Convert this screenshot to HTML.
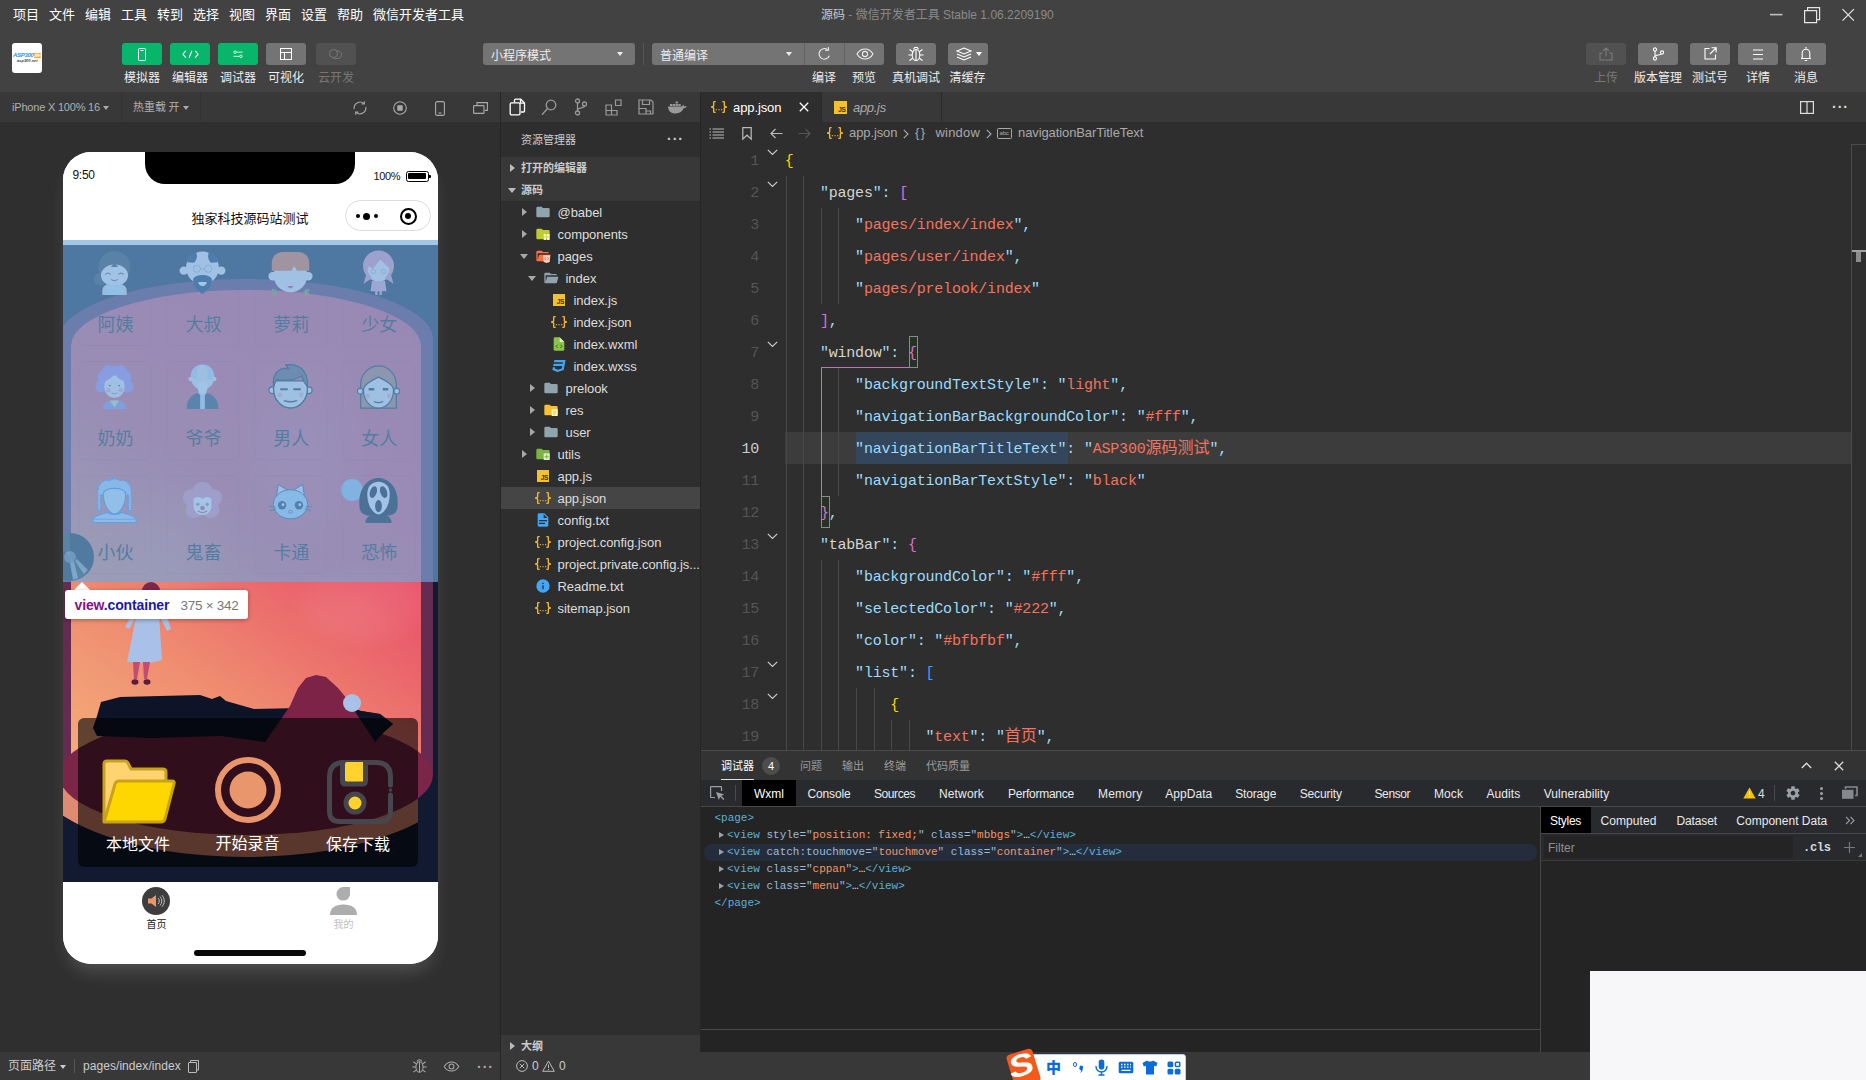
<!DOCTYPE html>
<html lang="zh-CN">
<head>
<meta charset="utf-8">
<title>微信开发者工具</title>
<style>
*{box-sizing:border-box;margin:0;padding:0}
html,body{width:1866px;height:1080px;overflow:hidden;background:#2e2e2e}
body{position:relative;font-family:"Liberation Sans","Noto Sans CJK SC",sans-serif;font-size:12px;color:#ddd;line-height:1}
.a{position:absolute}
.t{position:absolute;white-space:nowrap;line-height:1}
svg{position:absolute;overflow:visible}
/* top */
#menubar{left:0;top:0;width:1866px;height:30px;background:#424242}
#menubar .m{position:absolute;top:8px;font-size:13px;color:#fff;white-space:nowrap}
#toolbar{left:0;top:30px;width:1866px;height:62px;background:#424242}
.tb{position:absolute;top:13px;width:40px;height:22px;border-radius:3px;background:#747474}
.tb.g{background:#07b56b}
.tb.d{background:#515151}
.tl{position:absolute;top:42.300px;font-size:12px;color:#eee;white-space:nowrap;transform:translateX(-50%)}
.tl.d{color:#777}
.sel{position:absolute;top:13px;height:22px;background:#747474;border-radius:3px;color:#eee;font-size:12px}
/* sim */
#sim{left:0;top:92px;width:500px;height:988px;background:#2f2f2f}
#simbar{left:0;top:0;width:500px;height:30px;background:#383838}
#simfoot{left:0;top:960px;width:500px;height:28px;background:#383838}
#phone{left:63px;top:60px;width:375px;height:812px;border-radius:28px;overflow:hidden;background:#fff;box-shadow:0 12px 18px -5px rgba(255,255,255,.17)}
.card{position:absolute;width:73px;height:99px;border:1px solid rgba(60,30,60,.10);border-radius:6px}
.cn{position:absolute;left:0;width:73px;top:68px;text-align:center;font-size:18px;color:#1c2a34;white-space:nowrap}
.pl{font-size:16px;color:#fff}
/* explorer */
#exp{left:501px;top:92px;width:199px;height:988px;background:#2e2e2e}
.row{position:absolute;left:0;width:199px;height:22px}
.row .n{position:absolute;top:5px;font-size:13px;color:#ddd;white-space:nowrap;letter-spacing:-0.05px}
/* editor */
#ed{left:701px;top:92px;width:1165px;height:658px;background:#2e2e2e}
.cl{position:absolute;left:0;width:1165px;height:32px;line-height:32px;white-space:pre}
.cl .ln{position:absolute;left:0;top:1.500px;width:58px;text-align:right;font:15px/32px "Liberation Mono",monospace;letter-spacing:-0.2px;color:#555}
.cl .ln.cur{color:#ccc}
.cl .cd{position:absolute;left:83.700px;top:1.500px;font:15px/32px "Liberation Mono","Noto Sans CJK SC",monospace;letter-spacing:-0.2015px;color:#d4d4d4;white-space:pre}
.gd{position:absolute;top:0;width:1px;height:32px;background:#484848}
.y{color:#ffd700}.m{color:#da70d6}.b{color:#3a9fff}.q{color:#9cdcfe}.w{color:#d4d4d4}.s{color:#f4735e}
.sc{line-height:0;color:#f4735e;font-family:"Noto Sans CJK SC",sans-serif;font-size:16px;letter-spacing:0}
#panel{left:701px;top:750px;width:1165px;height:302px;background:#242424}
.dt{top:37.500px;font-size:12px;letter-spacing:-0.25px}
.dl{position:absolute;left:0;height:17px;width:839px}
.dc{position:absolute;top:0;font:11px/17px "Liberation Mono",monospace;white-space:pre;letter-spacing:-0.02px}
.ar{position:absolute;top:4.500px;border:3.500px solid transparent;border-left:5px solid #9aa0a6;border-right:0}
.tg{color:#5db0d7}.an{color:#9bbbdc}.av{color:#f29766}.el{color:#e8eaed}
#status{left:501px;top:1052px;width:1365px;height:28px;background:#383838}
</style>
</head>
<body>
<div id="menubar" class="a">
<span class="m" style="left:13px">项目</span><span class="m" style="left:49px">文件</span><span class="m" style="left:85px">编辑</span><span class="m" style="left:121px">工具</span><span class="m" style="left:157px">转到</span><span class="m" style="left:193px">选择</span><span class="m" style="left:229px">视图</span><span class="m" style="left:265px">界面</span><span class="m" style="left:301px">设置</span><span class="m" style="left:337px">帮助</span><span class="m" style="left:373px">微信开发者工具</span>
<div class="t" id="wtitle" style="left:821px;top:9px;font-size:12px;color:#8a8a8a"><span style="color:#c8c8c8">源码</span> - 微信开发者工具 Stable 1.06.2209190</div>
<svg style="left:1762px;top:0" width="104" height="30" viewBox="0 0 104 30" fill="none" stroke="#e6e6e6" stroke-width="1.2">
<path d="M8 14.6h12.5" stroke="#bdbdbd" stroke-width="1.6"/>
<path d="M42.6 10.6h12v12h-12z M45.6 10.6v-3h12v12h-3"/>
<path d="M80.5 9.2l11.4 11.4 M91.9 9.2L80.5 20.6"/>
</svg>
</div>
<div id="toolbar" class="a">
<div class="a" style="left:12px;top:13px;width:30px;height:30px;border-radius:3px;background:#fff;overflow:hidden">
<div class="t" style="left:1px;top:9.300px;font-size:6px;font-weight:bold;font-style:italic;color:#3a8fd0;letter-spacing:-0.3px">ASP300<span style="background:#f39a1e;color:#fff;font-size:4px">源码</span></div>
<div class="t" style="left:5px;top:16.300px;font-size:4px;font-weight:bold;font-style:italic;color:#444">asp300.net</div>
</div>
<div class="tb g" style="left:122px"><svg style="left:16px;top:4.5px" width="8" height="13" viewBox="0 0 8 13" fill="none" stroke="#fff" stroke-width="1"><rect x=".5" y=".5" width="7" height="12" rx="1"/><path d="M2.5 2.5h3"/></svg></div>
<div class="tb g" style="left:170px"><svg style="left:11.500px;top:6.500px" width="17" height="8.500" viewBox="0 0 18 9" fill="none" stroke="#fff" stroke-width="1.150"><path d="M4 1L1 4.5 4 8M14 1l3 3.500L14 8M10.500 .8L7.500 8.200"/></svg></div>
<div class="tb g" style="left:218px"><svg style="left:15px;top:6.500px" width="10" height="8.500" viewBox="0 0 12 10" fill="none" stroke="#d9f5e8" stroke-width="1.150"><circle cx="2.500" cy="2.500" r="1.500"/><path d="M4 2.500h7.500"/><circle cx="9.500" cy="7.500" r="1.500"/><path d="M.5 7.500h7.500"/></svg></div>
<div class="tb" style="left:266px"><svg style="left:14px;top:5px" width="12" height="12" viewBox="0 0 12 12" fill="none" stroke="#fff" stroke-width="1"><rect x=".5" y=".5" width="11" height="11"/><path d="M.5 4.500h11M4.500 4.500v7"/></svg></div>
<div class="tb d" style="left:316px"><svg style="left:12px;top:5px" width="16" height="12" viewBox="0 0 16 12" fill="none" stroke="#777" stroke-width="1"><circle cx="5.500" cy="5.500" r="4"/><path d="M8.500 3.200a3.800 3.800 0 1 1 2 7.300H5.500"/></svg></div>
<span class="tl" style="left:142px">模拟器</span><span class="tl" style="left:190px">编辑器</span><span class="tl" style="left:238px">调试器</span><span class="tl" style="left:286px">可视化</span><span class="tl d" style="left:336px">云开发</span>

<div class="sel" style="left:483px;width:152px"><span class="t" style="left:8px;top:6.500px">小程序模式</span><div class="a" style="left:134px;top:9px;border:3px solid transparent;border-top:4px solid #eee"></div></div>
<div class="a" style="left:643px;top:13px;width:1px;height:22px;background:#555"></div>
<div class="sel" style="left:652px;width:232px"><span class="t" style="left:8px;top:6.500px">普通编译</span><div class="a" style="left:134px;top:9px;border:3px solid transparent;border-top:4px solid #eee"></div>
<div class="a" style="left:151.800px;top:0;width:1px;height:22px;background:#636363"></div><div class="a" style="left:191.800px;top:0;width:1px;height:22px;background:#636363"></div>
<svg style="left:165px;top:4px" width="15" height="14" viewBox="0 0 15 14" fill="none" stroke="#eee" stroke-width="1.1"><path d="M12.300 8.800A5.300 5.300 0 1 1 10.500 2.600"/><path d="M8.200 3.400l3.400-.3-.4-3"/></svg>
<svg style="left:204px;top:5px" width="18" height="12" viewBox="0 0 18 12" fill="none" stroke="#eee" stroke-width="1.1"><path d="M1 6c2-3.300 5-5 8-5s6 1.700 8 5c-2 3.300-5 5-8 5s-6-1.700-8-5z"/><circle cx="9" cy="6" r="2.600"/></svg>
</div>
<span class="tl" style="left:824px">编译</span><span class="tl" style="left:864px">预览</span>
<div class="tb" style="left:896px"><svg style="left:11px;top:3px" width="18" height="16" viewBox="0 0 18 16" fill="none" stroke="#fff" stroke-width="1.1"><ellipse cx="9" cy="9" rx="3.800" ry="5.500"/><path d="M9 3.500v11M6.500 3.300a2.600 2.600 0 0 1 5 0M5.200 9H1.500M16.500 9h-3.700M5.700 5.700L2.500 3.500M12.300 5.700l3.200-2.200M5.700 12.300l-3.200 2.200M12.300 12.300l3.200 2.200"/></svg></div>
<div class="tb" style="left:948px"><svg style="left:8px;top:4px" width="16" height="14" viewBox="0 0 16 14" fill="none" stroke="#fff" stroke-width="1.1"><path d="M8 1l7 3-7 3-7-3z M1 7l7 3 7-3 M1 10l7 3 7-3"/></svg><div class="a" style="left:28px;top:9px;border:3px solid transparent;border-top:4px solid #fff"></div></div>
<span class="tl" style="left:916px">真机调试</span><span class="tl" style="left:967.500px">清缓存</span>

<div class="tb d" style="left:1586px"><svg style="left:13px;top:4px" width="14" height="14" viewBox="0 0 14 14" fill="none" stroke="#7c7c7c" stroke-width="1.1"><path d="M7 9.500V1.200M4 3.800l3-2.800 3 2.800M3.800 6H1v7h12V6h-2.800"/></svg></div>
<div class="tb" style="left:1638px"><svg style="left:14px;top:4px" width="13" height="14" viewBox="0 0 13 14" fill="none" stroke="#fff" stroke-width="1.1"><circle cx="3" cy="2.500" r="1.600"/><circle cx="3" cy="11.500" r="1.600"/><circle cx="10" cy="5.500" r="1.600"/><path d="M3 4.200v5.600M3 9.800c0-2.500 5.500-1.300 6-3"/></svg></div>
<div class="tb" style="left:1690px"><svg style="left:14px;top:4px" width="13" height="13" viewBox="0 0 13 13" fill="none" stroke="#fff" stroke-width="1.1"><path d="M5.500 1.500H1v10.500h10.500V7.500M7.500 .8h4.700v4.700M12 1L6 7"/></svg></div>
<div class="tb" style="left:1738px"><svg style="left:14px;top:6px" width="12" height="11" viewBox="0 0 12 11" fill="none" stroke="#fff" stroke-width="1.1"><path d="M1 1h10M1 5.500h10M1 10h10"/></svg></div>
<div class="tb" style="left:1786px"><svg style="left:14px;top:3px" width="12" height="16" viewBox="0 0 12 16" fill="none" stroke="#fff" stroke-width="1.1"><path d="M6 1v1.500M1 12.500h10M2.200 12.500V7a3.800 3.800 0 0 1 7.600 0v5.500M4.800 14.500h2.400"/></svg></div>
<span class="tl d" style="left:1606px">上传</span><span class="tl" style="left:1658px">版本管理</span><span class="tl" style="left:1710px">测试号</span><span class="tl" style="left:1758px">详情</span><span class="tl" style="left:1806px">消息</span>
</div>
<div id="sim" class="a"><div id="simbar" class="a">
<span class="t" style="left:12px;top:9.500px;font-size:11px;color:#b0b0b0;letter-spacing:-0.2px">iPhone X 100% 16</span><div class="a" style="left:103px;top:14px;border:3px solid transparent;border-top:4px solid #aaa"></div>
<div class="a" style="left:121px;top:0;width:1px;height:30px;background:#333"></div>
<span class="t" style="left:133px;top:9.500px;font-size:11px;color:#b0b0b0;word-spacing:-0.5px">热重载 开</span><div class="a" style="left:183px;top:14px;border:3px solid transparent;border-top:4px solid #aaa"></div>
<div class="a" style="left:200px;top:0;width:1px;height:30px;background:#333"></div>
<svg style="left:353px;top:9px" width="14" height="14" viewBox="0 0 14 14" fill="none" stroke="#aaa" stroke-width="1.1"><path d="M1.200 8.200A6 6 0 0 1 11 2.600M12.800 5.800A6 6 0 0 1 3 11.400"/><path d="M11.300 .3v2.600H8.700M2.700 13.700v-2.600h2.600"/></svg>
<svg style="left:393px;top:9px" width="14" height="14" viewBox="0 0 14 14" fill="none" stroke="#aaa" stroke-width="1.1"><circle cx="7" cy="7" r="6.300"/><rect x="4.300" y="4.300" width="5.400" height="5.400" rx=".8" fill="#aaa" stroke="none"/></svg>
<svg style="left:435px;top:8.500px" width="10" height="15" viewBox="0 0 10 15" fill="none" stroke="#aaa" stroke-width="1.100"><rect x=".6" y=".6" width="8.800" height="13.800" rx="1.500"/><path d="M3.500 12h3"/></svg>
<svg style="left:473px;top:10px" width="15" height="12" viewBox="0 0 15 12" fill="none" stroke="#aaa" stroke-width="1.100"><path d="M4 3V.6h10.400v7.800H12"/><rect x=".6" y="3.600" width="10.400" height="7.800" rx=".5"/></svg>
</div><div id="phone" class="a">
<svg style="left:0;top:93px" width="375" height="637" viewBox="0 0 375 637">
<defs><linearGradient id="sky" gradientUnits="userSpaceOnUse" x1="340" y1="60" x2="20" y2="520"><stop offset="0" stop-color="#ea4a69"/><stop offset=".45" stop-color="#e9586a"/><stop offset=".75" stop-color="#ef8c70"/><stop offset="1" stop-color="#f4ac7a"/></linearGradient>
<radialGradient id="cl"><stop offset="0" stop-color="#fff" stop-opacity=".10"/><stop offset=".6" stop-color="#fff" stop-opacity=".06"/><stop offset="1" stop-color="#fff" stop-opacity="0"/></radialGradient><clipPath id="jar"><path d="M8 600V101A175 56 0 0 1 358 101V600z"/></clipPath><clipPath id="lh"><rect x="-10" y="480" width="365" height="157"/></clipPath><clipPath id="ph"><rect x="15" y="473" width="340" height="149"/></clipPath></defs>
<rect width="375" height="637" fill="#111a31"/>
<ellipse cx="183" cy="525" rx="215" ry="87" fill="#e08a72" clip-path="url(#lh)"/>
<path d="M-4 530V94A187 60 0 0 1 370 94V530z" fill="#652b50"/>
<path d="M8 530V101A175 56 0 0 1 358 101V530z" fill="url(#sky)"/>
<g clip-path="url(#jar)">
<ellipse cx="300" cy="360" rx="75" ry="46" fill="url(#cl)"/><ellipse cx="240" cy="200" rx="70" ry="120" fill="url(#cl)" opacity=".7"/><ellipse cx="110" cy="300" rx="60" ry="70" fill="url(#cl)" opacity=".6"/>
</g>
<ellipse cx="183" cy="530" rx="187" ry="60" fill="#7b2548"/>
<g clip-path="url(#jar)">
<polygon points="30,483 34,471 38,457 57,452 137,450 149,454 157,451 163,456 191,464 237,463 298,466 317,469 330,479 322,486 309,497 267,493 201,497 159,491 87,493 34,491" fill="#0d1428"/>
<polygon points="253,430 243,433 235,443 227,461 207,490 187,520 165,545 335,545 328,525 309,490 289,460 275,443 263,432" fill="#7c2347"/>
<polygon points="289,462 298,466 317,469 330,479 322,486 312,497 303,483" fill="#0d1428"/>
</g>
<circle cx="289" cy="458" r="9" fill="#a9c1e6"/>
<circle cx="289" cy="245" r="11" fill="#a4c4ee"/>
<g><path d="M76 357l11-3 12 3 9 27-4 2-8-16 3 45-12 3-23-1 9-45-7 12-4-2z" fill="#a9c0e8"/><circle cx="88" cy="346" r="9" fill="#7a2a48"/><path d="M70 417l1 17h3l3-17zM80 417l1 17h3l3-17z" fill="#c24c72"/><ellipse cx="72" cy="437" rx="3.500" ry="2.800" fill="#5a1c38"/><ellipse cx="84" cy="437" rx="3.500" ry="2.800" fill="#5a1c38"/></g>
</svg>
<div class="a" style="left:0;top:0;width:375px;height:88px;background:#fff"></div>
<div class="a" style="left:82px;top:0;width:210px;height:32px;background:#000;border-radius:0 0 20px 20px"></div>
<span class="t" style="left:9.500px;top:17px;font-size:12px;color:#111;letter-spacing:-0.3px">9:50</span>
<span class="t" style="left:310.500px;top:19px;font-size:11px;color:#111;letter-spacing:-0.4px">100%</span>
<div class="a" style="left:342.500px;top:19px;width:23px;height:10.500px;border:1.200px solid #000;border-radius:2.500px"><div class="a" style="left:1px;top:1px;width:18.600px;height:6.100px;background:#000;border-radius:1px"></div></div><div class="a" style="left:366px;top:22.500px;width:1.500px;height:3.500px;background:#000;border-radius:0 1px 1px 0"></div>
<span class="t" style="left:128.500px;top:59.500px;font-size:13px;color:#111">独家科技源码站测试</span>
<div class="a" style="left:281.500px;top:47.500px;width:86.500px;height:31.500px;border:1px solid #dcdcdc;border-radius:16px;background:#fff"></div>
<div class="a" style="left:300px;top:60.500px;width:7px;height:7px;border-radius:4px;background:#000"></div><div class="a" style="left:292.500px;top:62px;width:4px;height:4px;border-radius:2px;background:#000"></div><div class="a" style="left:310.500px;top:62px;width:4px;height:4px;border-radius:2px;background:#000"></div>
<div class="a" style="left:337px;top:55.500px;width:17px;height:17px;border:2.200px solid #000;border-radius:9px"><div class="a" style="left:3.300px;top:3.300px;width:6px;height:6px;border-radius:3px;background:#000"></div></div>
<div class="card" style="left:15.0px;top:95px"><svg style="left:13px;top:2px" width="45" height="45" viewBox="0 0 48 48"><circle cx="24" cy="18" r="17" fill="#34353f"/><circle cx="9" cy="31" r="7" fill="#34353f"/><ellipse cx="24" cy="27" rx="14.500" ry="11.500" fill="#fff4f6"/><path d="M24 14l-4 4h8z" fill="#34353f"/><path d="M11 48v-5c0-4 3-6 6-6h14c3 0 6 2 6 6v5z" fill="#f1e2cf"/><path d="M15 37h18v11H15z" fill="#d6ecf8"/><path d="M14 26q3-3 6 0M28 26q3-3 6 0M20.500 31.500q3.500 3 7 0" stroke="#34353f" fill="none" stroke-width="1"/></svg><span class="cn">阿姨</span></div><div class="card" style="left:102.9px;top:95px"><svg style="left:13px;top:2px" width="45" height="45" viewBox="0 0 48 48"><circle cx="24" cy="19" r="17.500" fill="#fff1f3"/><path d="M7.500 13A17.500 17.500 0 0 1 17 2.500c2 4 1 8-2 11zM40.500 13A17.500 17.500 0 0 0 31 2.500c-2 4-1 8 2 11z" fill="#0a2b50"/><circle cx="4" cy="22" r="4.500" fill="#fff1f3"/><circle cx="44" cy="22" r="4.500" fill="#fff1f3"/><path d="M14 32c0-7 20-7 20 0 0 8-6 12-10 15-4-3-10-7-10-15z" fill="#0a2b50"/><path d="M19.500 34h9a4.500 4.500 0 0 1-9 0z" fill="#fff"/><circle cx="18" cy="20" r="3.800" fill="none" stroke="#8fa8bd" stroke-width=".8"/><circle cx="30" cy="20" r="3.800" fill="none" stroke="#8fa8bd" stroke-width=".8"/><path d="M21.800 20h4.400" stroke="#8fa8bd" stroke-width=".8"/></svg><span class="cn">大叔</span></div><div class="card" style="left:190.8px;top:95px"><svg style="left:13px;top:2px" width="45" height="45" viewBox="0 0 48 48"><circle cx="24" cy="27" r="18" fill="#fff1f3"/><circle cx="5" cy="28" r="4.500" fill="#fff1f3"/><circle cx="43" cy="28" r="4.500" fill="#fff1f3"/><path d="M4 22v-8C4 6 10 2 16 2h16c6 0 12 4 12 12v8H31l-3-5-3 5z" fill="#fb6e2c"/><path d="M20.500 38.500h7q-3.500 5-7 0z" fill="#e8355a"/><path d="M8 41l-5 7 7 1zM40 41l5 7-7 1z" fill="#e0742e"/><path d="M4 42l6 4M44 42l-6 4" stroke="#4fb04a" stroke-width="2"/></svg><span class="cn">萝莉</span></div><div class="card" style="left:278.7px;top:95px"><svg style="left:13px;top:2px" width="45" height="45" viewBox="0 0 48 48"><circle cx="24" cy="17" r="16.500" fill="#f693b2"/><circle cx="24" cy="22" r="11.500" fill="#fff0f2"/><path d="M8 14C10 4 38 4 40 14l-6 4-8-8-8 10z" fill="#f693b2"/><path d="M12 22l-4 14 9-6zM36 22l4 14-9-6z" fill="#f693b2"/><circle cx="18.500" cy="23" r="2.200" fill="#fff" stroke="#b07890" stroke-width=".7"/><circle cx="29.500" cy="23" r="2.200" fill="#fff" stroke="#b07890" stroke-width=".7"/><path d="M17 33h14l1.500 11h-5v4h-2.500v-4h-2v4h-2.500v-4h-5z" fill="#f4a6c4"/></svg><span class="cn">少女</span></div><div class="card" style="left:15.0px;top:209px"><svg style="left:13px;top:2px" width="45" height="45" viewBox="0 0 48 48"><circle cx="24" cy="14" r="12" fill="#b784ea"/><circle cx="13" cy="14" r="7" fill="#b784ea"/><circle cx="35" cy="14" r="7" fill="#b784ea"/><circle cx="10" cy="24" r="6.500" fill="#b784ea"/><circle cx="38" cy="24" r="6.500" fill="#b784ea"/><circle cx="17" cy="7" r="6" fill="#b784ea"/><circle cx="31" cy="7" r="6" fill="#b784ea"/><ellipse cx="24" cy="24" rx="11" ry="12" fill="#ffeef0"/><path d="M14 18c4-1 8-4 10-7 2 3 6 6 10 7-1-8-19-8-20 0z" fill="#b784ea"/><circle cx="17.500" cy="28" r="2.500" fill="#f7b3c2"/><circle cx="30.500" cy="28" r="2.500" fill="#f7b3c2"/><circle cx="19" cy="23" r="1" fill="#3a3f78"/><circle cx="29" cy="23" r="1" fill="#3a3f78"/><path d="M21 31q3 2 6 0" stroke="#e0507a" fill="none"/><path d="M11 48c2-7 6-9 13-9s11 2 13 9z" fill="#9a8fe0"/><path d="M19 39h10l-5 7z" fill="#f3e6a8"/></svg><span class="cn">奶奶</span></div><div class="card" style="left:102.9px;top:209px"><svg style="left:13px;top:2px" width="45" height="45" viewBox="0 0 48 48"><ellipse cx="24" cy="14" rx="12.500" ry="13.500" fill="#f5e9ea"/><path d="M12 16C10 6 17 1 22 1c-4 4-4 10-3 15zM36 16C38 6 31 1 26 1c4 4 4 10 3 15z" fill="#cfe0f2"/><circle cx="11.500" cy="16" r="2.500" fill="#f5e9ea"/><circle cx="36.500" cy="16" r="2.500" fill="#f5e9ea"/><path d="M18 22q6-6 12 0l-2 9-4 4-4-4z" fill="#fafafa"/><path d="M7 48c0-10 5-15 12-17l5 6 5-6c7 2 12 7 12 17z" fill="#2f3f4e"/><path d="M21.500 33h5v15h-5z" fill="#cfe0f2"/></svg><span class="cn">爷爷</span></div><div class="card" style="left:190.8px;top:209px"><svg style="left:13px;top:2px" width="45" height="45" viewBox="0 0 48 48"><circle cx="4.500" cy="28" r="3.500" fill="#ffeef0" stroke="#14293a" stroke-width="1.300"/><circle cx="43.500" cy="28" r="3.500" fill="#ffeef0" stroke="#14293a" stroke-width="1.300"/><path d="M6 27a18 20 0 0 0 36 0V18H6z" fill="#ffeef0" stroke="#14293a" stroke-width="1.500"/><path d="M6 24C4 10 12 3 22 5l-3-4c12-2 24 4 23 23-3-3-5-7-6-11-8 4-18 5-27 4-1 2-2 4-3 7z" fill="#6c5658" stroke="#14293a" stroke-width="1.300"/><path d="M13 27h8M27 27h8" stroke="#14293a" stroke-width="2.200"/><path d="M17 39q7 2.500 14 0" stroke="#14293a" stroke-width="1.500" fill="none"/><circle cx="12.500" cy="33" r="2.500" fill="#f7b3c2"/><circle cx="35.500" cy="33" r="2.500" fill="#f7b3c2"/></svg><span class="cn">男人</span></div><div class="card" style="left:278.7px;top:209px"><svg style="left:13px;top:2px" width="45" height="45" viewBox="0 0 48 48"><path d="M5 47V22a19 20 0 0 1 38 0v25z" fill="#c47358" stroke="#14293a" stroke-width="1.300"/><circle cx="4.500" cy="29" r="3" fill="#ffeef0" stroke="#14293a" stroke-width="1.200"/><circle cx="43.500" cy="29" r="3" fill="#ffeef0" stroke="#14293a" stroke-width="1.200"/><path d="M8 28a16 19 0 0 0 32 0c0-6-8-10-16-14-8 4-16 8-16 14z" fill="#ffeef0" stroke="#14293a" stroke-width="1.300"/><path d="M13.500 27h6M28.500 27h6" stroke="#14293a" stroke-width="2.600"/><path d="M19 40q5 2.500 10 0" stroke="#14293a" stroke-width="1.400" fill="none"/><circle cx="12.500" cy="34" r="2.500" fill="#f7b3c2"/><circle cx="35.500" cy="34" r="2.500" fill="#f7b3c2"/></svg><span class="cn">女人</span></div><div class="card" style="left:15.0px;top:323px"><svg style="left:13px;top:2px" width="45" height="45" viewBox="0 0 48 48"><path d="M6 34V16C6 4 14 1 18 3c4-3 8-3 12 0 4-2 12 1 12 13v18l-3 2V18H9v18z" fill="#b9d7ff" stroke="#3f8dff" stroke-width="1.500" stroke-dasharray="1.500 1"/><path d="M12 17c0-4 6-6 12-6s12 2 12 6c0 10-4 19-12 22-8-3-12-12-12-22z" fill="#d6e9ff" stroke="#3f8dff" stroke-width="1.200"/><path d="M1 47.500v-3c0-4 8-5 15-8 4 3 12 3 16 0 7 3 15 4 15 8v3z" fill="#c6ddff" stroke="#3f8dff" stroke-width="1.200"/><path d="M2 44h44" stroke="#3f8dff" stroke-width=".8"/></svg><span class="cn">小伙</span></div><div class="card" style="left:102.9px;top:323px"><svg style="left:13px;top:2px" width="45" height="45" viewBox="0 0 48 48"><circle cx="24" cy="15" r="11" fill="#fb8aa8"/><circle cx="12" cy="21" r="9" fill="#fb8aa8"/><circle cx="36" cy="21" r="9" fill="#fb8aa8"/><circle cx="15" cy="34" r="9" fill="#fb8aa8"/><circle cx="33" cy="34" r="9" fill="#fb8aa8"/><path d="M14.500 22c4-2 6-2 9.500 0 3.500-2 5.500-2 9.500 0v8a9.500 9.500 0 0 1-19 0z" fill="#fff"/><circle cx="24" cy="32" r="2.500" fill="#f0456c"/><path d="M19 26v4M17 28h4M29 26v4M27 28h4" stroke="#f0688a" stroke-width="1.400"/><path d="M19 35q5 4 10 0" stroke="#f0456c" fill="none" stroke-width="1.300"/></svg><span class="cn">鬼畜</span></div><div class="card" style="left:190.8px;top:323px"><svg style="left:13px;top:2px" width="45" height="45" viewBox="0 0 48 48"><path d="M9 20l2-13 10 6zM39 20l-2-13-10 6z" fill="#e8f0ff" stroke="#2d4d6a" stroke-width="1"/><ellipse cx="24" cy="28" rx="18.500" ry="15.500" fill="#b8dcff" stroke="#2d4d6a" stroke-width="1"/><circle cx="15" cy="29" r="4.500" fill="#22374f"/><circle cx="33" cy="29" r="4.500" fill="#22374f"/><circle cx="16" cy="28.500" r="1.500" fill="#fff"/><circle cx="34" cy="28.500" r="1.500" fill="#fff"/><ellipse cx="24" cy="36" rx="2.200" ry="1.500" fill="#f7c3cf" stroke="#2d4d6a" stroke-width=".7"/><path d="M1 30l7 1M2 35l7-2M47 30l-7 1M46 35l-7-2" stroke="#2d4d6a" stroke-width=".9"/></svg><span class="cn">卡通</span></div><div class="card" style="left:278.7px;top:323px"><svg style="left:13px;top:2px" width="45" height="45" viewBox="0 0 48 48"><path d="M4 33C1 12 12 0 24 0s23 12 20 33c-1 4-5 7-10 7H14c-5 0-9-3-10-7z" fill="#07060f"/><path d="M10 48c0-7 6-10 14-10s14 3 14 10z" fill="#0b0a16"/><path d="M12 17c0-9 6-13 12-13s12 4 12 13c0 10-4 20-12 22-8-2-12-12-12-22z" fill="#fff6f8"/><ellipse cx="18.500" cy="15" rx="3.600" ry="6.500" fill="#07060f" transform="rotate(18 18.500 15)"/><ellipse cx="29.500" cy="15" rx="3.600" ry="6.500" fill="#07060f" transform="rotate(-18 29.500 15)"/><ellipse cx="24" cy="30" rx="3.600" ry="6.500" fill="#07060f"/></svg><span class="cn">恐怖</span></div>
<svg style="left:-18px;top:380px" width="50" height="50" viewBox="0 0 50 50"><circle cx="25" cy="25" r="24" fill="#18222c"/><circle cx="25" cy="25" r="6" fill="#6a7680"/><path d="M25 25L8 8A24 24 0 0 1 25 1zM25 25l5 24a24 24 0 0 0 12-7z" fill="#fff" opacity=".12"/><path d="M25 31l3 17 5-2-4-16zM30 29l9 13 4-4-11-11z" fill="#e8edf0" opacity=".6"/></svg>
<div class="a" style="left:0;top:88px;width:375px;height:342px;background:rgba(111,168,220,.66)"></div>
<div class="a" style="left:15px;top:566px;width:340px;height:149px;border-radius:6px;background:rgba(0,0,0,.6)"></div>
<svg style="left:38px;top:607px" width="76" height="66" viewBox="0 0 76 66"><path d="M3 62V5q0-3 3-3h18q2 0 3 2l3 6h32q3 0 3 3v12" fill="#ffd470" stroke="#c9a21a" stroke-width="3" stroke-linejoin="round"/><path d="M3 63l11-38q1-3 4-3h53q3 0 2 3l-9 35q-1 3-4 3z" fill="#ffd700" stroke="#c9a21a" stroke-width="3" stroke-linejoin="round"/></svg>
<svg style="left:150px;top:603px" width="70" height="70" viewBox="0 0 70 70"><circle cx="35" cy="35" r="30" fill="none" stroke="#e9966c" stroke-width="6"/><circle cx="35" cy="35" r="18.500" fill="#e9966c"/></svg>
<svg style="left:263px;top:607px" width="68" height="66" viewBox="0 0 68 66"><path d="M20 3.500h30Q64.500 3.500 64.500 18v8M64.500 36v16q0 10.500-10 10.500h-41q-10 0-10-10.500V18Q3.500 3.500 18 3.500" fill="none" stroke="#46464c" stroke-width="5" stroke-linecap="round"/><rect x="19" y="3" width="20" height="20" rx="2" fill="#ffd22e" stroke="#46464c" stroke-width="0"/><path d="M16.500 3v19q0 3 3 3h17q3 0 3-3V3" fill="none" stroke="#46464c" stroke-width="5"/><circle cx="29" cy="44" r="9" fill="#ffd22e" stroke="#46464c" stroke-width="5"/><circle cx="64.500" cy="31" r="1.800" fill="#46464c"/></svg>
<span class="t pl" style="left:43px;top:685px">本地文件</span><span class="t pl" style="left:152.500px;top:683.500px">开始录音</span><span class="t pl" style="left:263px;top:685px">保存下载</span>
<div class="a" style="left:0;top:730px;width:375px;height:82px;background:#fff"></div>
<div class="a" style="left:79px;top:735px;width:28px;height:28px;border-radius:14px;background:#3d3d3d"><svg style="left:5px;top:7px" width="18" height="14" viewBox="0 0 18 14"><path d="M1 4.500h3.500L9 1v12L4.500 9.500H1z" fill="#e9966c"/><path d="M11 4a4 4 0 0 1 0 6M13 2.500a6.500 6.500 0 0 1 0 9M15 1.200a8.500 8.500 0 0 1 0 11.600" stroke="#bbb" fill="none" stroke-width="1"/></svg></div>
<span class="t" style="left:83.500px;top:768px;font-size:10px;color:#222">首页</span>
<svg style="left:267px;top:735px" width="27" height="28" viewBox="0 0 27 28"><path d="M6.500 8a7 7.500 0 0 1 7-8h6.500v8a7 7.500 0 0 1-13.500 0z" fill="#adadad"/><path d="M0 28c0-7 5-10.500 13.500-10.500S27 21 27 28z" fill="#adadad"/></svg>
<span class="t" style="left:270.500px;top:768px;font-size:10px;color:#bfbfbf">我的</span>
<div class="a" style="left:131px;top:798px;width:112px;height:5.500px;border-radius:3px;background:#080808"></div>
</div>
<div class="a" style="left:73.500px;top:490px;border:8px solid transparent;border-top:0;border-bottom:8.500px solid #fff"></div>
<div class="a" style="left:65px;top:498px;width:183px;height:29px;background:#fff;border-radius:3px;box-shadow:0 1px 4px rgba(0,0,0,.35)"><span class="t" style="left:9.500px;top:8px;font-size:14px;font-weight:bold;color:#1a1aa6;letter-spacing:-0.14px"><span style="color:#881280">view</span>.container</span><span class="t" style="left:115.500px;top:8.500px;font-size:13.500px;color:#777;letter-spacing:-0.28px">375 × 342</span></div>
<div id="simfoot" class="a">
<span class="t" style="left:8px;top:8px;font-size:12px;color:#ccc">页面路径</span><div class="a" style="left:60px;top:13px;border:3px solid transparent;border-top:4px solid #ccc"></div>
<div class="a" style="left:74px;top:7px;width:1px;height:14px;background:#555"></div>
<span class="t" style="left:83px;top:8px;font-size:12px;color:#ccc;letter-spacing:0.06px">pages/index/index</span>
<svg style="left:188px;top:8px" width="12" height="13" viewBox="0 0 12 13" fill="none" stroke="#bbb" stroke-width="1"><path d="M2.500 2.500V.5h8v9.500h-2"/><rect x=".5" y="2.500" width="8" height="10" rx=".5"/></svg>
<svg style="left:411px;top:6px" width="17" height="16" viewBox="0 0 18 16" fill="none" stroke="#aaa" stroke-width="1.100"><ellipse cx="9" cy="9" rx="3.800" ry="5.500"/><path d="M9 3.500v11M6.500 3.300a2.600 2.600 0 0 1 5 0M5.200 9H1.500M16.500 9h-3.700M5.700 5.700L2.500 3.500M12.300 5.700l3.200-2.200M5.700 12.300l-3.200 2.200M12.300 12.300l3.200 2.200"/></svg>
<svg style="left:443px;top:8.500px" width="17" height="11" viewBox="0 0 18 12" fill="none" stroke="#aaa" stroke-width="1.100"><path d="M1 6c2-3.300 5-5 8-5s6 1.700 8 5c-2 3.300-5 5-8 5s-6-1.700-8-5z"/><circle cx="9" cy="6" r="2.600"/></svg>
<div class="t" style="left:477px;top:7.500px;font-size:14px;color:#aaa;letter-spacing:1px;font-weight:bold">···</div>
</div></div>
<div class="a" style="left:500px;top:92px;width:1px;height:988px;background:#262626"></div>
<div id="exp" class="a">
<div class="a" style="left:0;top:0;width:199px;height:30px;background:#383838"></div>
<svg style="left:8px;top:6px" width="17" height="18" viewBox="0 0 17 18" fill="none" stroke="#fff" stroke-width="1.300"><path d="M5.500 4.500V2.200a1 1 0 0 1 1-1h5.300L15.500 5v8a1 1 0 0 1-1 1H12"/><path d="M11.500 1.500V5.200H15"/><rect x="1.200" y="4.800" width="9.800" height="12" rx="1.200" fill="#383838"/></svg>
<svg style="left:40px;top:7px" width="16" height="17" viewBox="0 0 16 17" fill="none" stroke="#9a9a9a" stroke-width="1.300"><circle cx="10" cy="6" r="4.800"/><path d="M6.500 9.500L1 15.800"/></svg>
<svg style="left:73px;top:6px" width="14" height="18" viewBox="0 0 14 18" fill="none" stroke="#9a9a9a" stroke-width="1.300"><circle cx="3.500" cy="3" r="2"/><circle cx="3.500" cy="15" r="2"/><circle cx="10.500" cy="6" r="2"/><path d="M3.500 5v8M3.500 12c0-3 7-1.500 7-4"/></svg>
<svg style="left:104px;top:7px" width="17" height="17" viewBox="0 0 17 17" fill="none" stroke="#9a9a9a" stroke-width="1.200"><path d="M1 6h5.500v5.500H1zM1 11.500h5.500V16H1zM6.500 11.500H12V16H6.500zM10.500 1H16v5.500h-5.500z"/></svg>
<svg style="left:137px;top:7px" width="16" height="16" viewBox="0 0 16 16" fill="none" stroke="#9a9a9a" stroke-width="1.200"><path d="M1 1h12l2 2v12H1zM4.500 1v4.500h7V1M1 9.500h7V15M8 12h4.500v3"/></svg>
<svg style="left:166px;top:8px" width="20" height="14" viewBox="0 0 20 14"><path fill="#9a9a9a" d="M1 6.500h13.500c.8-.2 1.300-.8 1.500-1.800.8.500 1.200 1.100 1.200 1.800.9-.3 1.800-.2 2.600.3-.7 1-1.700 1.400-3 1.300-1.200 3.600-4 5.400-8.300 5.400C3.800 13.500 1.300 11 1 6.500zM3 4h2.300v2H3zM5.800 4h2.300v2H5.800zM8.600 4h2.300v2H8.600zM8.600 1.500h2.300v2H8.600zM11.400 4h2.300v2h-2.300z"/></svg>
<span class="t" style="left:20px;top:43px;font-size:11px;color:#ccc">资源管理器</span>
<div class="t" style="left:166px;top:40px;font-size:14px;color:#ccc;letter-spacing:1px;font-weight:bold">···</div>
<div class="a" style="left:0;top:65px;width:199px;height:44px;background:#383838"></div>
<div class="a" style="left:9px;top:72px;border:4px solid transparent;border-left:5px solid #bbb"></div>
<span class="t" style="left:20px;top:71px;font-size:11px;font-weight:bold;color:#ccc">打开的编辑器</span>
<div class="a" style="left:7px;top:96px;border:4px solid transparent;border-top:5px solid #bbb"></div>
<span class="t" style="left:20px;top:93px;font-size:11px;font-weight:bold;color:#ccc">源码</span>
<div class="row" style="top:109px"><div class="a" style="left:21px;top:7px;border:4px solid transparent;border-left:5px solid #a8a8a8"></div><svg style="left:34px;top:3px" width="16" height="16" viewBox="0 0 24 24"><path fill="#90a4ae" d="M10 4H4c-1.100 0-2 .9-2 2v12c0 1.100.9 2 2 2h16c1.100 0 2-.9 2-2V8c0-1.100-.9-2-2-2h-8l-2-2z"/></svg><span class="n" style="left:56.5px">@babel</span></div>
<div class="row" style="top:131px"><div class="a" style="left:21px;top:7px;border:4px solid transparent;border-left:5px solid #a8a8a8"></div><svg style="left:34px;top:3px" width="16" height="16" viewBox="0 0 24 24"><path fill="#c0ca33" d="M10 4H4c-1.100 0-2 .9-2 2v12c0 1.100.9 2 2 2h16c1.100 0 2-.9 2-2V8c0-1.100-.9-2-2-2h-8l-2-2z"/><path fill="#f0f4c3" d="M13 12h4v4h-4zM18 12h4v4h-4zM13 17h4v4h-4zM18 17h4v4h-4z"/></svg><span class="n" style="left:56.5px">components</span></div>
<div class="row" style="top:153px"><div class="a" style="left:19px;top:9px;border:4px solid transparent;border-top:5px solid #a8a8a8"></div><svg style="left:34px;top:3px" width="16" height="16" viewBox="0 0 24 24"><path fill="#ff7043" d="M19 20H4a2 2 0 0 1-2-2V6c0-1.100.9-2 2-2h6l2 2h7a2 2 0 0 1 2 2H4v10l2.140-8h17.070l-2.280 8.500c-.23.870-1.010 1.500-1.930 1.500z"/><path fill="#ffccbc" d="M12 11h11l-1 10-4.500 1.500L13 21z"/><path fill="none" stroke="#ff5722" stroke-width="1.200" d="M16.500 14l-2 2 2 2M18.500 14l2 2-2 2"/></svg><span class="n" style="left:56.5px">pages</span></div>
<div class="row" style="top:175px"><div class="a" style="left:27px;top:9px;border:4px solid transparent;border-top:5px solid #a8a8a8"></div><svg style="left:42px;top:3px" width="16" height="16" viewBox="0 0 24 24"><path fill="#90a4ae" d="M19 20H4a2 2 0 0 1-2-2V6c0-1.100.9-2 2-2h6l2 2h7a2 2 0 0 1 2 2H4v10l2.140-8h17.070l-2.280 8.500c-.23.870-1.010 1.500-1.930 1.500z"/></svg><span class="n" style="left:64.5px">index</span></div>
<div class="row" style="top:197px"><div class="a" style="left:52px;top:5px;width:12px;height:12px;background:#f2c12e"><span class="t" style="right:1px;bottom:1px;font-size:6.500px;font-weight:bold;color:#3d2f00;letter-spacing:-0.3px">JS</span></div><span class="n" style="left:72.5px">index.js</span></div>
<div class="row" style="top:219px"><svg style="left:50px;top:3px" width="16" height="16" viewBox="0 0 24 24"><path fill="#f5b92e" d="M5 3h2v2H5v5a2 2 0 0 1-2 2 2 2 0 0 1 2 2v5h2v2H5c-1.070-.270-2-.9-2-2v-4a2 2 0 0 0-2-2H0v-2h1a2 2 0 0 0 2-2V5a2 2 0 0 1 2-2m14 0a2 2 0 0 1 2 2v4a2 2 0 0 0 2 2h1v2h-1a2 2 0 0 0-2 2v4a2 2 0 0 1-2 2h-2v-2h2v-5a2 2 0 0 1 2-2 2 2 0 0 1-2-2V5h-2V3h2m-7 12a1 1 0 0 1 1 1 1 1 0 0 1-1 1 1 1 0 0 1-1-1 1 1 0 0 1 1-1m-4 0a1 1 0 0 1 1 1 1 1 0 0 1-1 1 1 1 0 0 1-1-1 1 1 0 0 1 1-1m8 0a1 1 0 0 1 1 1 1 1 0 0 1-1 1 1 1 0 0 1-1-1 1 1 0 0 1 1-1z"/></svg><span class="n" style="left:72.5px">index.json</span></div>
<div class="row" style="top:241px"><svg style="left:50px;top:3px" width="16" height="16" viewBox="0 0 24 24"><path fill="#8bc34a" d="M13 2H6a2 2 0 0 0-2 2v16a2 2 0 0 0 2 2h12a2 2 0 0 0 2-2V9z"/><path fill="#dcedc8" d="M13 2v7h7z"/><path fill="none" stroke="#33691e" stroke-width="1.500" d="M10 13l-2.500 2.500L10 18M14 13l2.500 2.500L14 18"/></svg><span class="n" style="left:72.5px">index.wxml</span></div>
<div class="row" style="top:263px"><svg style="left:50px;top:3px" width="16" height="16" viewBox="0 0 24 24"><path fill="#42a5f5" d="M5 3l-.65 3.340h13.590l-.44 2.160H3.920l-.66 3.330h13.590l-.76 3.810-5.480 1.810-4.750-1.810.33-1.640H2.850l-.79 4 7.850 3 9.050-3 1.200-6.030.24-1.210L21.940 3z"/></svg><span class="n" style="left:72.5px">index.wxss</span></div>
<div class="row" style="top:285px"><div class="a" style="left:29px;top:7px;border:4px solid transparent;border-left:5px solid #a8a8a8"></div><svg style="left:42px;top:3px" width="16" height="16" viewBox="0 0 24 24"><path fill="#90a4ae" d="M10 4H4c-1.100 0-2 .9-2 2v12c0 1.100.9 2 2 2h16c1.100 0 2-.9 2-2V8c0-1.100-.9-2-2-2h-8l-2-2z"/></svg><span class="n" style="left:64.5px">prelook</span></div>
<div class="row" style="top:307px"><div class="a" style="left:29px;top:7px;border:4px solid transparent;border-left:5px solid #a8a8a8"></div><svg style="left:42px;top:3px" width="16" height="16" viewBox="0 0 24 24"><path fill="#fbc02d" d="M10 4H4c-1.100 0-2 .9-2 2v12c0 1.100.9 2 2 2h16c1.100 0 2-.9 2-2V8c0-1.100-.9-2-2-2h-8l-2-2z"/><path fill="#fff9c4" d="M13 11h9v10h-9z"/><path stroke="#fbc02d" stroke-width="1.300" d="M15 14h5M15 16.500h5M15 19h3"/></svg><span class="n" style="left:64.5px">res</span></div>
<div class="row" style="top:329px"><div class="a" style="left:29px;top:7px;border:4px solid transparent;border-left:5px solid #a8a8a8"></div><svg style="left:42px;top:3px" width="16" height="16" viewBox="0 0 24 24"><path fill="#90a4ae" d="M10 4H4c-1.100 0-2 .9-2 2v12c0 1.100.9 2 2 2h16c1.100 0 2-.9 2-2V8c0-1.100-.9-2-2-2h-8l-2-2z"/></svg><span class="n" style="left:64.5px">user</span></div>
<div class="row" style="top:351px"><div class="a" style="left:21px;top:7px;border:4px solid transparent;border-left:5px solid #a8a8a8"></div><svg style="left:34px;top:3px" width="16" height="16" viewBox="0 0 24 24"><path fill="#7cb342" d="M10 4H4c-1.100 0-2 .9-2 2v12c0 1.100.9 2 2 2h16c1.100 0 2-.9 2-2V8c0-1.100-.9-2-2-2h-8l-2-2z"/><path fill="#dcedc8" d="M13 11h9v10h-9z"/><path stroke="#7cb342" stroke-width="1.500" d="M17.500 13v6M14.500 16h6"/></svg><span class="n" style="left:56.5px">utils</span></div>
<div class="row" style="top:373px"><div class="a" style="left:36px;top:5px;width:12px;height:12px;background:#f2c12e"><span class="t" style="right:1px;bottom:1px;font-size:6.500px;font-weight:bold;color:#3d2f00;letter-spacing:-0.3px">JS</span></div><span class="n" style="left:56.5px">app.js</span></div>
<div class="row" style="top:395px;background:#454545"><svg style="left:34px;top:3px" width="16" height="16" viewBox="0 0 24 24"><path fill="#f5b92e" d="M5 3h2v2H5v5a2 2 0 0 1-2 2 2 2 0 0 1 2 2v5h2v2H5c-1.070-.270-2-.9-2-2v-4a2 2 0 0 0-2-2H0v-2h1a2 2 0 0 0 2-2V5a2 2 0 0 1 2-2m14 0a2 2 0 0 1 2 2v4a2 2 0 0 0 2 2h1v2h-1a2 2 0 0 0-2 2v4a2 2 0 0 1-2 2h-2v-2h2v-5a2 2 0 0 1 2-2 2 2 0 0 1-2-2V5h-2V3h2m-7 12a1 1 0 0 1 1 1 1 1 0 0 1-1 1 1 1 0 0 1-1-1 1 1 0 0 1 1-1m-4 0a1 1 0 0 1 1 1 1 1 0 0 1-1 1 1 1 0 0 1-1-1 1 1 0 0 1 1-1m8 0a1 1 0 0 1 1 1 1 1 0 0 1-1 1 1 1 0 0 1-1-1 1 1 0 0 1 1-1z"/></svg><span class="n" style="left:56.5px">app.json</span></div>
<div class="row" style="top:417px"><svg style="left:34px;top:3px" width="16" height="16" viewBox="0 0 24 24"><path fill="#42a5f5" d="M13 9h5.500L13 3.500V9M6 2h8l6 6v12a2 2 0 0 1-2 2H6a2 2 0 0 1-2-2V4c0-1.110.890-2 2-2m9 16v-2H6v2h9m3-4v-2H6v2h12z"/></svg><span class="n" style="left:56.5px">config.txt</span></div>
<div class="row" style="top:439px"><svg style="left:34px;top:3px" width="16" height="16" viewBox="0 0 24 24"><path fill="#f5b92e" d="M5 3h2v2H5v5a2 2 0 0 1-2 2 2 2 0 0 1 2 2v5h2v2H5c-1.070-.270-2-.9-2-2v-4a2 2 0 0 0-2-2H0v-2h1a2 2 0 0 0 2-2V5a2 2 0 0 1 2-2m14 0a2 2 0 0 1 2 2v4a2 2 0 0 0 2 2h1v2h-1a2 2 0 0 0-2 2v4a2 2 0 0 1-2 2h-2v-2h2v-5a2 2 0 0 1 2-2 2 2 0 0 1-2-2V5h-2V3h2m-7 12a1 1 0 0 1 1 1 1 1 0 0 1-1 1 1 1 0 0 1-1-1 1 1 0 0 1 1-1m-4 0a1 1 0 0 1 1 1 1 1 0 0 1-1 1 1 1 0 0 1-1-1 1 1 0 0 1 1-1m8 0a1 1 0 0 1 1 1 1 1 0 0 1-1 1 1 1 0 0 1-1-1 1 1 0 0 1 1-1z"/></svg><span class="n" style="left:56.5px">project.config.json</span></div>
<div class="row" style="top:461px"><svg style="left:34px;top:3px" width="16" height="16" viewBox="0 0 24 24"><path fill="#f5b92e" d="M5 3h2v2H5v5a2 2 0 0 1-2 2 2 2 0 0 1 2 2v5h2v2H5c-1.070-.270-2-.9-2-2v-4a2 2 0 0 0-2-2H0v-2h1a2 2 0 0 0 2-2V5a2 2 0 0 1 2-2m14 0a2 2 0 0 1 2 2v4a2 2 0 0 0 2 2h1v2h-1a2 2 0 0 0-2 2v4a2 2 0 0 1-2 2h-2v-2h2v-5a2 2 0 0 1 2-2 2 2 0 0 1-2-2V5h-2V3h2m-7 12a1 1 0 0 1 1 1 1 1 0 0 1-1 1 1 1 0 0 1-1-1 1 1 0 0 1 1-1m-4 0a1 1 0 0 1 1 1 1 1 0 0 1-1 1 1 1 0 0 1-1-1 1 1 0 0 1 1-1m8 0a1 1 0 0 1 1 1 1 1 0 0 1-1 1 1 1 0 0 1-1-1 1 1 0 0 1 1-1z"/></svg><span class="n" style="left:56.5px">project.private.config.js...</span></div>
<div class="row" style="top:483px"><svg style="left:34px;top:3px" width="16" height="16" viewBox="0 0 24 24"><path fill="#42a5f5" d="M13 9h-2V7h2m0 10h-2v-6h2m-1-9A10 10 0 0 0 2 12a10 10 0 0 0 10 10 10 10 0 0 0 10-10A10 10 0 0 0 12 2z"/></svg><span class="n" style="left:56.5px">Readme.txt</span></div>
<div class="row" style="top:505px"><svg style="left:34px;top:3px" width="16" height="16" viewBox="0 0 24 24"><path fill="#f5b92e" d="M5 3h2v2H5v5a2 2 0 0 1-2 2 2 2 0 0 1 2 2v5h2v2H5c-1.070-.270-2-.9-2-2v-4a2 2 0 0 0-2-2H0v-2h1a2 2 0 0 0 2-2V5a2 2 0 0 1 2-2m14 0a2 2 0 0 1 2 2v4a2 2 0 0 0 2 2h1v2h-1a2 2 0 0 0-2 2v4a2 2 0 0 1-2 2h-2v-2h2v-5a2 2 0 0 1 2-2 2 2 0 0 1-2-2V5h-2V3h2m-7 12a1 1 0 0 1 1 1 1 1 0 0 1-1 1 1 1 0 0 1-1-1 1 1 0 0 1 1-1m-4 0a1 1 0 0 1 1 1 1 1 0 0 1-1 1 1 1 0 0 1-1-1 1 1 0 0 1 1-1m8 0a1 1 0 0 1 1 1 1 1 0 0 1-1 1 1 1 0 0 1-1-1 1 1 0 0 1 1-1z"/></svg><span class="n" style="left:56.5px">sitemap.json</span></div>
<div class="a" style="left:0;top:943px;width:199px;height:45px;background:#383838"></div>
<div class="a" style="left:9px;top:950px;border:4px solid transparent;border-left:5px solid #bbb"></div>
<span class="t" style="left:20px;top:948.500px;font-size:11px;font-weight:bold;color:#ccc">大纲</span>
</div>
<div class="a" style="left:700px;top:92px;width:1px;height:988px;background:#262626"></div>
<div id="ed" class="a" style="overflow:hidden">
<div class="a" style="left:0;top:0;width:1165px;height:30px;background:#383838"></div>
<div class="a" style="left:0;top:0;width:119.500px;height:30px;background:#2e2e2e"></div>
<div class="a" style="left:119.500px;top:0;width:1px;height:30px;background:#2a2a2a"></div><div class="a" style="left:239.500px;top:0;width:1px;height:30px;background:#2a2a2a"></div>
<svg style="left:10px;top:7px" width="16" height="16" viewBox="0 0 24 24"><path fill="#f5b92e" d="M5 3h2v2H5v5a2 2 0 0 1-2 2 2 2 0 0 1 2 2v5h2v2H5c-1.070-.270-2-.9-2-2v-4a2 2 0 0 0-2-2H0v-2h1a2 2 0 0 0 2-2V5a2 2 0 0 1 2-2m14 0a2 2 0 0 1 2 2v4a2 2 0 0 0 2 2h1v2h-1a2 2 0 0 0-2 2v4a2 2 0 0 1-2 2h-2v-2h2v-5a2 2 0 0 1 2-2 2 2 0 0 1-2-2V5h-2V3h2m-7 12a1 1 0 0 1 1 1 1 1 0 0 1-1 1 1 1 0 0 1-1-1 1 1 0 0 1 1-1m-4 0a1 1 0 0 1 1 1 1 1 0 0 1-1 1 1 1 0 0 1-1-1 1 1 0 0 1 1-1m8 0a1 1 0 0 1 1 1 1 1 0 0 1-1 1 1 1 0 0 1-1-1 1 1 0 0 1 1-1z"/></svg>
<span class="t" style="left:32px;top:8.500px;font-size:13px;color:#fff;letter-spacing:-0.1px">app.json</span>
<svg style="left:98px;top:10px" width="10" height="10" viewBox="0 0 10 10" stroke="#fff" stroke-width="1.300" fill="none"><path d="M.8.8l8.400 8.400M9.200.8L.8 9.200"/></svg>
<div class="a" style="left:132.500px;top:9px;width:13px;height:13px;background:#f2c12e"><span class="t" style="right:1px;bottom:1px;font-size:6.500px;font-weight:bold;color:#3d2f00;letter-spacing:-0.3px">JS</span></div>
<span class="t" style="left:152px;top:8.500px;font-size:13px;color:#aaa;font-style:italic;letter-spacing:-0.3px">app.js</span>
<svg style="left:1099px;top:8.500px" width="14" height="13" viewBox="0 0 14 13" fill="none" stroke="#ddd" stroke-width="1.200"><rect x=".6" y=".6" width="12.800" height="11.800"/><path d="M7 .6v11.800"/></svg>
<div class="t" style="left:1131px;top:7.500px;font-size:14px;color:#ddd;letter-spacing:1px;font-weight:bold">···</div>
<svg style="left:8px;top:35.500px" width="15" height="11" viewBox="0 0 15 11" fill="none" stroke="#bbb" stroke-width="1.100"><path d="M.5 1h1.500M3.500 1H15M.5 4h1.500M3.500 4H15M.5 7h1.500M3.500 7H15M.5 10h1.500M3.500 10H15"/></svg>
<svg style="left:41px;top:35px" width="10" height="13" viewBox="0 0 10 13" fill="none" stroke="#bbb" stroke-width="1.200"><path d="M.8.6h8.400v11.600L5 8.200.8 12.200z"/></svg>
<svg style="left:69px;top:36px" width="13" height="11" viewBox="0 0 13 11" fill="none" stroke="#bbb" stroke-width="1.200"><path d="M12.500 5.500H1M5.500 1L1 5.500 5.500 10"/></svg>
<svg style="left:97px;top:36px" width="13" height="11" viewBox="0 0 13 11" fill="none" stroke="#555" stroke-width="1.200"><path d="M.5 5.500H12M7.500 1L12 5.500 7.500 10"/></svg>
<svg style="left:126px;top:33px" width="16" height="16" viewBox="0 0 24 24"><path fill="#f5b92e" d="M5 3h2v2H5v5a2 2 0 0 1-2 2 2 2 0 0 1 2 2v5h2v2H5c-1.070-.270-2-.9-2-2v-4a2 2 0 0 0-2-2H0v-2h1a2 2 0 0 0 2-2V5a2 2 0 0 1 2-2m14 0a2 2 0 0 1 2 2v4a2 2 0 0 0 2 2h1v2h-1a2 2 0 0 0-2 2v4a2 2 0 0 1-2 2h-2v-2h2v-5a2 2 0 0 1 2-2 2 2 0 0 1-2-2V5h-2V3h2m-7 12a1 1 0 0 1 1 1 1 1 0 0 1-1 1 1 1 0 0 1-1-1 1 1 0 0 1 1-1m-4 0a1 1 0 0 1 1 1 1 1 0 0 1-1 1 1 1 0 0 1-1-1 1 1 0 0 1 1-1m8 0a1 1 0 0 1 1 1 1 1 0 0 1-1 1 1 1 0 0 1-1-1 1 1 0 0 1 1-1z"/></svg>
<span class="t" style="left:148px;top:34px;font-size:13px;color:#aaa;letter-spacing:-0.1px">app.json</span>
<svg style="left:202px;top:37px" width="6" height="10" viewBox="0 0 6 10" fill="none" stroke="#aaa" stroke-width="1.100"><path d="M.8.8L5 5 .8 9.200"/></svg>
<span class="t" style="left:214px;top:33.500px;font-size:13px;color:#aaa;letter-spacing:1.500px">{}</span>
<span class="t" style="left:234.500px;top:34px;font-size:13px;color:#aaa;letter-spacing:0.2px">window</span>
<svg style="left:285px;top:37px" width="6" height="10" viewBox="0 0 6 10" fill="none" stroke="#aaa" stroke-width="1.100"><path d="M.8.8L5 5 .8 9.200"/></svg>
<div class="a" style="left:296px;top:36px;width:15px;height:11px;border:1px solid #aaa;border-radius:1.500px"><span class="t" style="left:1.500px;top:1px;font-size:6px;color:#aaa;letter-spacing:-0.2px">abc</span></div>
<span class="t" style="left:317px;top:34px;font-size:13px;color:#aaa;letter-spacing:-0.1px">navigationBarTitleText</span>
<div class="a" style="left:84px;top:340px;width:1067px;height:32px;background:#3c3c3c"></div>
<div class="a" style="left:155.4px;top:340px;width:211.2px;height:32px;background:#33465c"></div>
<div class="a" style="left:207.7px;top:244px;width:9px;height:32px;border:1px solid #8a8a8a;background:rgba(0,80,0,.18)"></div>
<div class="a" style="left:119.7px;top:404px;width:9px;height:32px;border:1px solid #8a8a8a;background:rgba(0,80,0,.18)"></div>
<div class="a" style="left:119.7px;top:275px;width:88.0px;height:1px;background:#b878b4"></div>
<div class="a" style="left:119.7px;top:275px;width:1px;height:130px;background:#b878b4"></div>
<div class="cl" style="top:52px"><span class="ln">1</span><svg style="left:66px;top:5px" width="11" height="7" viewBox="0 0 11 7" fill="none" stroke="#ccc" stroke-width="1.200"><path d="M.8.800L5.500 5.500 10.200.800"/></svg><span class="cd"><span class="y">{</span></span></div>
<div class="cl" style="top:84px"><i class="gd" style="left:84.5px"></i><i class="gd" style="left:102.1px"></i><span class="ln">2</span><svg style="left:66px;top:5px" width="11" height="7" viewBox="0 0 11 7" fill="none" stroke="#ccc" stroke-width="1.200"><path d="M.8.800L5.500 5.500 10.200.800"/></svg><span class="cd">    <span class="q">"</span><span class="w">pages</span><span class="q">":</span> <span class="m">[</span></span></div>
<div class="cl" style="top:116px"><i class="gd" style="left:84.5px"></i><i class="gd" style="left:102.1px"></i><i class="gd" style="left:119.7px"></i><i class="gd" style="left:137.3px"></i><span class="ln">3</span><span class="cd">        <span class="q">"</span><span class="s">pages/index/index</span><span class="q">",</span></span></div>
<div class="cl" style="top:148px"><i class="gd" style="left:84.5px"></i><i class="gd" style="left:102.1px"></i><i class="gd" style="left:119.7px"></i><i class="gd" style="left:137.3px"></i><span class="ln">4</span><span class="cd">        <span class="q">"</span><span class="s">pages/user/index</span><span class="q">",</span></span></div>
<div class="cl" style="top:180px"><i class="gd" style="left:84.5px"></i><i class="gd" style="left:102.1px"></i><i class="gd" style="left:119.7px"></i><i class="gd" style="left:137.3px"></i><span class="ln">5</span><span class="cd">        <span class="q">"</span><span class="s">pages/prelook/index</span><span class="q">"</span></span></div>
<div class="cl" style="top:212px"><i class="gd" style="left:84.5px"></i><i class="gd" style="left:102.1px"></i><span class="ln">6</span><span class="cd">    <span class="m">]</span><span class="q">,</span></span></div>
<div class="cl" style="top:244px"><i class="gd" style="left:84.5px"></i><i class="gd" style="left:102.1px"></i><span class="ln">7</span><svg style="left:66px;top:5px" width="11" height="7" viewBox="0 0 11 7" fill="none" stroke="#ccc" stroke-width="1.200"><path d="M.8.800L5.500 5.500 10.200.800"/></svg><span class="cd">    <span class="q">"</span><span class="w">window</span><span class="q">":</span> <span class="m">{</span></span></div>
<div class="cl" style="top:276px"><i class="gd" style="left:84.5px"></i><i class="gd" style="left:102.1px"></i><i class="gd" style="left:137.3px"></i><span class="ln">8</span><span class="cd">        <span class="q">"backgroundTextStyle":</span> <span class="q">"</span><span class="s">light</span><span class="q">",</span></span></div>
<div class="cl" style="top:308px"><i class="gd" style="left:84.5px"></i><i class="gd" style="left:102.1px"></i><i class="gd" style="left:137.3px"></i><span class="ln">9</span><span class="cd">        <span class="q">"navigationBarBackgroundColor":</span> <span class="q">"</span><span class="s">#fff</span><span class="q">",</span></span></div>
<div class="cl" style="top:340px"><i class="gd" style="left:84.5px"></i><i class="gd" style="left:102.1px"></i><i class="gd" style="left:137.3px"></i><span class="ln cur">10</span><span class="cd">        <span class="q">"navigationBarTitleText":</span> <span class="q">"</span><span class="s">ASP300</span><span class="sc">源码测试</span><span class="q">",</span></span></div>
<div class="cl" style="top:372px"><i class="gd" style="left:84.5px"></i><i class="gd" style="left:102.1px"></i><i class="gd" style="left:137.3px"></i><span class="ln">11</span><span class="cd">        <span class="q">"navigationBarTextStyle":</span> <span class="q">"</span><span class="s">black</span><span class="q">"</span></span></div>
<div class="cl" style="top:404px"><i class="gd" style="left:84.5px"></i><i class="gd" style="left:102.1px"></i><span class="ln">12</span><span class="cd">    <span class="m">}</span><span class="q">,</span></span></div>
<div class="cl" style="top:436px"><i class="gd" style="left:84.5px"></i><i class="gd" style="left:102.1px"></i><span class="ln">13</span><svg style="left:66px;top:5px" width="11" height="7" viewBox="0 0 11 7" fill="none" stroke="#ccc" stroke-width="1.200"><path d="M.8.800L5.500 5.500 10.200.800"/></svg><span class="cd">    <span class="q">"</span><span class="w">tabBar</span><span class="q">":</span> <span class="m">{</span></span></div>
<div class="cl" style="top:468px"><i class="gd" style="left:84.5px"></i><i class="gd" style="left:102.1px"></i><i class="gd" style="left:119.7px"></i><i class="gd" style="left:137.3px"></i><span class="ln">14</span><span class="cd">        <span class="q">"backgroundColor":</span> <span class="q">"</span><span class="s">#fff</span><span class="q">",</span></span></div>
<div class="cl" style="top:500px"><i class="gd" style="left:84.5px"></i><i class="gd" style="left:102.1px"></i><i class="gd" style="left:119.7px"></i><i class="gd" style="left:137.3px"></i><span class="ln">15</span><span class="cd">        <span class="q">"selectedColor":</span> <span class="q">"</span><span class="s">#222</span><span class="q">",</span></span></div>
<div class="cl" style="top:532px"><i class="gd" style="left:84.5px"></i><i class="gd" style="left:102.1px"></i><i class="gd" style="left:119.7px"></i><i class="gd" style="left:137.3px"></i><span class="ln">16</span><span class="cd">        <span class="q">"color":</span> <span class="q">"</span><span class="s">#bfbfbf</span><span class="q">",</span></span></div>
<div class="cl" style="top:564px"><i class="gd" style="left:84.5px"></i><i class="gd" style="left:102.1px"></i><i class="gd" style="left:119.7px"></i><i class="gd" style="left:137.3px"></i><span class="ln">17</span><svg style="left:66px;top:5px" width="11" height="7" viewBox="0 0 11 7" fill="none" stroke="#ccc" stroke-width="1.200"><path d="M.8.800L5.500 5.500 10.200.800"/></svg><span class="cd">        <span class="q">"list":</span> <span class="b">[</span></span></div>
<div class="cl" style="top:596px"><i class="gd" style="left:84.5px"></i><i class="gd" style="left:102.1px"></i><i class="gd" style="left:119.7px"></i><i class="gd" style="left:137.3px"></i><i class="gd" style="left:154.9px"></i><i class="gd" style="left:172.5px"></i><span class="ln">18</span><svg style="left:66px;top:5px" width="11" height="7" viewBox="0 0 11 7" fill="none" stroke="#ccc" stroke-width="1.200"><path d="M.8.800L5.500 5.500 10.200.800"/></svg><span class="cd">            <span class="y">{</span></span></div>
<div class="cl" style="top:628px"><i class="gd" style="left:84.5px"></i><i class="gd" style="left:102.1px"></i><i class="gd" style="left:119.7px"></i><i class="gd" style="left:137.3px"></i><i class="gd" style="left:154.9px"></i><i class="gd" style="left:172.5px"></i><i class="gd" style="left:190.1px"></i><i class="gd" style="left:207.7px"></i><span class="ln">19</span><span class="cd">                <span class="q">"</span><span class="s">text</span><span class="q">":</span> <span class="q">"</span><span class="sc">首页</span><span class="q">",</span></span></div>
<div class="a" style="left:1150px;top:52px;width:15px;height:606px;border-left:1px solid #4a4a4a;border-top:1px solid #4a4a4a"></div>
<div class="a" style="left:1151px;top:158px;width:14px;height:2px;background:#a0a0a0"></div><div class="a" style="left:1155px;top:160px;width:5px;height:10px;background:#8c8c8c"></div>
</div>
<div id="panel" class="a" style="overflow:hidden">
<div class="a" style="left:0;top:0;width:1165px;height:30px;background:#333;border-top:1px solid #4a4a4a"></div>
<span class="t" style="left:20px;top:10.500px;font-size:11px;color:#fff">调试器</span><div class="a" style="left:20px;top:29px;width:33px;height:1px;background:#e0e0e0"></div>
<div class="a" style="left:61px;top:7px;width:18px;height:18px;border-radius:9px;background:#4d4d4d"><span class="t" style="left:6px;top:3.500px;font-size:11px;color:#fff">4</span></div>
<span class="t" style="left:99px;top:10.500px;font-size:11px;color:#9a9a9a">问题</span>
<span class="t" style="left:141px;top:10.500px;font-size:11px;color:#9a9a9a">输出</span>
<span class="t" style="left:183px;top:10.500px;font-size:11px;color:#9a9a9a">终端</span>
<span class="t" style="left:225px;top:10.500px;font-size:11px;color:#9a9a9a">代码质量</span>
<svg style="left:1100px;top:12px" width="11" height="7" viewBox="0 0 11 7" fill="none" stroke="#ddd" stroke-width="1.300"><path d="M.8 6L5.500 1.200 10.200 6"/></svg>
<svg style="left:1133px;top:11px" width="10" height="10" viewBox="0 0 10 10" stroke="#ddd" stroke-width="1.300" fill="none"><path d="M.8.8l8.400 8.400M9.200.8L.8 9.200"/></svg>
<div class="a" style="left:0;top:30px;width:1165px;height:27px;background:#292a2d;border-bottom:1px solid #474747"></div>
<svg style="left:9px;top:36px" width="15" height="15" viewBox="0 0 15 15" fill="none" stroke="#9aa0a6" stroke-width="1.200"><path d="M5 11.500H1.200a.6.6 0 0 1-.6-.6V1.200a.6.6 0 0 1 .6-.6h9.700a.6.6 0 0 1 .6.6V5"/><path d="M6 6l2.800 8 1.400-3.200 3.200 3.200 1-1-3.200-3.200L14.400 8.400z" fill="#9aa0a6" stroke="none"/></svg>
<div class="a" style="left:34px;top:35px;width:1px;height:16px;background:#4a4a4a"></div>
<div class="a" style="left:41px;top:30px;width:54px;height:26px;background:#000"></div>
<span class="t dt" id="dt_Wxml" style="left:53.0px;letter-spacing:0.00px;color:#fff">Wxml</span>
<span class="t dt" id="dt_Console" style="left:106.5px;letter-spacing:-0.15px;color:#e8eaed">Console</span>
<span class="t dt" id="dt_Sources" style="left:173.0px;letter-spacing:-0.43px;color:#e8eaed">Sources</span>
<span class="t dt" id="dt_Network" style="left:238.0px;letter-spacing:0.14px;color:#e8eaed">Network</span>
<span class="t dt" id="dt_Performance" style="left:307.0px;letter-spacing:-0.25px;color:#e8eaed">Performance</span>
<span class="t dt" id="dt_Memory" style="left:397.0px;letter-spacing:0.19px;color:#e8eaed">Memory</span>
<span class="t dt" id="dt_AppData" style="left:464.3px;letter-spacing:0.03px;color:#e8eaed">AppData</span>
<span class="t dt" id="dt_Storage" style="left:534.2px;letter-spacing:-0.15px;color:#e8eaed">Storage</span>
<span class="t dt" id="dt_Security" style="left:598.7px;letter-spacing:-0.14px;color:#e8eaed">Security</span>
<span class="t dt" id="dt_Sensor" style="left:673.5px;letter-spacing:-0.39px;color:#e8eaed">Sensor</span>
<span class="t dt" id="dt_Mock" style="left:733.0px;letter-spacing:0.08px;color:#e8eaed">Mock</span>
<span class="t dt" id="dt_Audits" style="left:785.5px;letter-spacing:0.07px;color:#e8eaed">Audits</span>
<span class="t dt" id="dt_Vulnerability" style="left:842.7px;letter-spacing:0.05px;color:#e8eaed">Vulnerability</span>
<svg style="left:1042px;top:37px" width="13" height="12" viewBox="0 0 13 12"><path d="M6.500.5L12.700 11.500H.3z" fill="#f5bd0a"/><path d="M6.500 4v4M6.500 9v1.300" stroke="#fff" stroke-width="1.200"/></svg>
<span class="t" style="left:1057px;top:37.500px;font-size:12px;color:#ddd">4</span>
<div class="a" style="left:1073px;top:35px;width:1px;height:16px;background:#4a4a4a"></div>
<svg style="left:1084px;top:35px" width="16" height="16" viewBox="0 0 24 24"><path fill="#9aa0a6" d="M19.430 12.980c.040-.320.070-.640.070-.980s-.030-.660-.070-.980l2.110-1.650c.190-.150.240-.420.120-.640l-2-3.460c-.120-.220-.390-.300-.610-.220l-2.490 1c-.520-.400-1.080-.730-1.690-.980l-.380-2.650A.488.488 0 0 0 14 2h-4c-.250 0-.460.180-.490.420l-.380 2.650c-.610.250-1.170.590-1.690.980l-2.490-1c-.230-.090-.490 0-.610.220l-2 3.460c-.130.220-.070.490.120.640l2.110 1.650c-.040.320-.070.650-.070.980s.030.660.070.980l-2.110 1.650c-.190.150-.240.420-.120.640l2 3.460c.120.220.390.300.610.220l2.490-1c.520.400 1.080.730 1.690.980l.380 2.650c.030.240.240.420.490.420h4c.250 0 .460-.180.490-.420l.380-2.650c.610-.250 1.170-.590 1.690-.980l2.490 1c.230.090.490 0 .610-.220l2-3.460c.120-.220.070-.490-.120-.640l-2.110-1.650zM12 15.500c-1.930 0-3.500-1.570-3.500-3.500s1.570-3.500 3.500-3.500 3.500 1.570 3.500 3.500-1.570 3.500-3.500 3.500z"/></svg>
<div class="a" style="left:1119px;top:37px;width:3px;height:3px;border-radius:2px;background:#9aa0a6;box-shadow:0 5px 0 #9aa0a6,0 10px 0 #9aa0a6"></div>
<svg style="left:1140px;top:36px" width="17" height="14" viewBox="0 0 17 14" fill="none" stroke="#85898e" stroke-width="1.600"><path d="M4.500 3V1h11.500v8.500h-2"/><rect x="1" y="3.800" width="11.500" height="9" fill="#85898e" stroke="none"/></svg>
<div class="a" style="left:3px;top:93.500px;width:833px;height:17px;background:#252d3c;border-radius:8px"></div>
<div class="dl" style="top:60px"><span class="dc" style="left:13.5px"><span class="tg">&lt;page&gt;</span></span></div>
<div class="dl" style="top:77px"><i class="ar" style="left:18px"></i><span class="dc" style="left:26px"><span class="tg">&lt;view</span><span class="an"> style="</span><span class="av">position: fixed;</span><span class="an">" class="</span><span class="av">mbbgs</span><span class="an">"</span><span class="tg">&gt;</span><span class="el">…</span><span class="tg">&lt;/view&gt;</span></span></div>
<div class="dl" style="top:94px"><i class="ar" style="left:18px"></i><span class="dc" style="left:26px"><span class="tg">&lt;view</span><span class="an"> catch:touchmove="</span><span class="av">touchmove</span><span class="an">" class="</span><span class="av">container</span><span class="an">"</span><span class="tg">&gt;</span><span class="el">…</span><span class="tg">&lt;/view&gt;</span></span></div>
<div class="dl" style="top:111px"><i class="ar" style="left:18px"></i><span class="dc" style="left:26px"><span class="tg">&lt;view</span><span class="an"> class="</span><span class="av">cppan</span><span class="an">"</span><span class="tg">&gt;</span><span class="el">…</span><span class="tg">&lt;/view&gt;</span></span></div>
<div class="dl" style="top:128px"><i class="ar" style="left:18px"></i><span class="dc" style="left:26px"><span class="tg">&lt;view</span><span class="an"> class="</span><span class="av">menu</span><span class="an">"</span><span class="tg">&gt;</span><span class="el">…</span><span class="tg">&lt;/view&gt;</span></span></div>
<div class="dl" style="top:145px"><span class="dc" style="left:13.5px"><span class="tg">&lt;/page&gt;</span></span></div>
<div class="a" style="left:0;top:279px;width:839px;height:1px;background:#4a4a4a"></div>
<div class="a" style="left:839px;top:57px;width:1px;height:245px;background:#474747"></div>
<div class="a" style="left:840px;top:57px;width:325px;height:27px;background:#292a2d;border-bottom:1px solid #474747"></div>
<div class="a" style="left:840px;top:57px;width:50px;height:26px;background:#000"></div>
<span class="t dt" id="st_Styl" style="left:849.0px;letter-spacing:-0.28px;top:64.500px;color:#fff">Styles</span>
<span class="t dt" id="st_Comp" style="left:899.5px;letter-spacing:0.08px;top:64.500px;color:#e8eaed">Computed</span>
<span class="t dt" id="st_Data" style="left:975.5px;letter-spacing:-0.12px;top:64.500px;color:#e8eaed">Dataset</span>
<span class="t dt" id="st_CompData" style="left:1035.3px;letter-spacing:0.02px;top:64.500px;color:#e8eaed">Component Data</span>
<svg style="left:1144px;top:66px" width="10" height="9" viewBox="0 0 10 9" fill="none" stroke="#9aa0a6" stroke-width="1.100"><path d="M1 .8L4.500 4.500 1 8.200M5.500 .8L9 4.500 5.500 8.200"/></svg>
<div class="a" style="left:840px;top:84px;width:325px;height:27px;background:#292a2d;border-bottom:1px solid #3a3a3a"></div>
<div class="a" style="left:843px;top:86px;width:249px;height:22px;background:#242424"></div>
<span class="t" style="left:847px;top:91.500px;font-size:12px;color:#8d9196">Filter</span>
<span class="t" style="left:1102px;top:91px;font:bold 12px 'Liberation Mono',monospace;color:#d5d8dc;letter-spacing:-0.3px">.cls</span>
<svg style="left:1143px;top:92px" width="11" height="11" viewBox="0 0 11 11" stroke="#777" stroke-width="1.200"><path d="M5.500 0v11M0 5.500h11"/></svg>
<div class="a" style="left:1157px;top:103px;border:2px solid transparent;border-right-color:#777;border-bottom-color:#777"></div>
</div>
<div id="status" class="a">
<svg style="left:15px;top:8px" width="12" height="12" viewBox="0 0 12 12" fill="none" stroke="#bbb" stroke-width="1"><circle cx="6" cy="6" r="5.400"/><path d="M3.800 3.800l4.400 4.400M8.200 3.800L3.800 8.200"/></svg>
<span class="t" style="left:31px;top:8px;font-size:12px;color:#ccc">0</span>
<svg style="left:41px;top:8px" width="13" height="12" viewBox="0 0 13 12" fill="none" stroke="#bbb" stroke-width="1"><path d="M6.500 1L12.300 11.300H.7z"/><path d="M6.500 4.500v3.500M6.500 9v1.200"/></svg>
<span class="t" style="left:58px;top:8px;font-size:12px;color:#ccc">0</span>
</div>
<div class="a" style="left:1590px;top:971px;width:276px;height:109px;background:#f7f7f9"></div>
<div class="a" id="ime" style="left:1030px;top:1054px;width:156px;height:30px;background:#fff;border:1px solid #b4cdf2;border-radius:3px">
<span class="t" style="left:15px;top:5px;font-size:15px;font-weight:900;color:#0b6bd8">中</span>
<div class="a" style="left:41.500px;top:7px;width:4.500px;height:4.500px;border:1.300px solid #0b6bd8;border-radius:3px"></div>
<svg style="left:47px;top:11px" width="6" height="8" viewBox="0 0 6 8"><path d="M1.500 1.500a1.800 1.800 0 1 1 3.300 1C4.800 5 3.500 6.500 1.500 7.200 3 6 3.300 5 3 4.200A1.800 1.800 0 0 1 1.500 1.500z" fill="#0b6bd8"/></svg>
<svg style="left:64px;top:4px" width="13" height="17" viewBox="0 0 13 17"><rect x="3.700" y=".5" width="5.600" height="10" rx="2.800" fill="#0b6bd8"/><path d="M1 7.500a5.500 5.500 0 0 0 11 0M6.500 13v2M4 16h5" stroke="#0b6bd8" stroke-width="1.400" fill="none" stroke-linecap="round"/></svg>
<svg style="left:87px;top:6px" width="16" height="13" viewBox="0 0 16 13"><rect x=".7" y=".7" width="14.600" height="11.600" rx="1.500" fill="#0b6bd8"/><path d="M3 3.500h1.500M6 3.500h1.500M9 3.500h1.500M12 3.500h1M3 6.200h1.500M6 6.200h1.500M9 6.200h1.500M12 6.200h1M3.500 9.300h9" stroke="#fff" stroke-width="1.300"/></svg>
<svg style="left:111px;top:5px" width="16" height="15" viewBox="0 0 16 15"><path d="M5 .5c.8 1.300 5.200 1.300 6 0l4.500 2.500-1.300 3.500-2.200-.8V14.500H4V5.700l-2.200.8L.5 3z" fill="#0b6bd8"/></svg>
<svg style="left:136px;top:6px" width="14" height="14" viewBox="0 0 14 14"><rect x=".5" y=".5" width="5.800" height="5.800" rx="1.500" fill="#0b6bd8"/><rect x="8.400" y="1.200" width="4.400" height="4.400" rx="1.200" fill="none" stroke="#0b6bd8" stroke-width="1.500"/><rect x=".5" y="7.700" width="5.800" height="5.800" rx="1.500" fill="#0b6bd8"/><rect x="7.700" y="7.700" width="5.800" height="5.800" rx="1.500" fill="#0b6bd8"/></svg>
</div>
<div class="a" style="left:1010px;top:1051px;width:27px;height:34px;background:#f2591c;border-radius:4px;transform:rotate(-17deg)"><span class="t" style="left:0px;top:-4px;font-size:36px;font-weight:bold;font-style:italic;color:#fff;letter-spacing:0;transform:scale(1.050,.85)">S</span></div>
</body>
</html>
